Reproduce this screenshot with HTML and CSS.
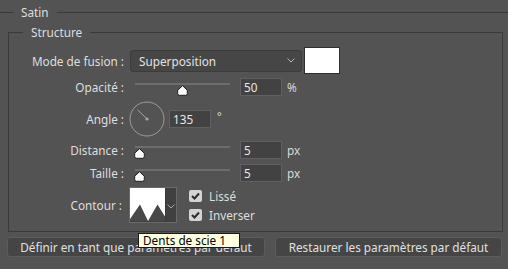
FILE: index.html
```html
<!DOCTYPE html>
<html lang="fr">
<head>
<meta charset="utf-8">
<title>Satin</title>
<link rel="stylesheet" href="styles.css">
</head>
<body>
<div class="panel">
  <div class="group-title"><span>Satin</span></div>
  <fieldset class="structure">
    <legend>Structure</legend>

    <div class="row row-mode">
      <span class="lbl">Mode de fusion :</span>
      <div class="select">
        <span>Superposition</span>
        <svg class="chev" width="8" height="5" viewBox="0 0 8 5"><path d="M0.5 0.5 L4 4 L7.5 0.5" fill="none" stroke="#b8b8b8" stroke-width="1"/></svg>
      </div>
      <div class="swatch"></div>
    </div>

    <div class="row row-slider row-opacity">
      <span class="lbl">Opacité :</span>
      <div class="slider">
        <div class="track"></div>
        <svg class="thumb" style="left:47px" width="11" height="11" viewBox="0 0 11 11"><path d="M5.5 0.7 L10.3 5.2 V8.6 Q10.3 10.3 8.6 10.3 H2.4 Q0.7 10.3 0.7 8.6 V5.2 Z" fill="#fafafa" stroke="#1e1e1e" stroke-width="1"/></svg>
      </div>
      <div class="field">50</div>
      <span class="unit">%</span>
    </div>

    <div class="row row-angle">
      <span class="lbl">Angle :</span>
      <svg class="dial" width="36" height="36" viewBox="0 0 36 36">
        <circle cx="18" cy="18" r="17" fill="none" stroke="#9c9c9c" stroke-width="1"/>
        <line x1="18" y1="18" x2="8.5" y2="8.8" stroke="#a8a8a8" stroke-width="1"/>
        <circle cx="18" cy="18" r="1.6" fill="#a8a8a8"/>
      </svg>
      <div class="field">135</div>
      <span class="deg">°</span>
    </div>

    <div class="row row-slider row-distance">
      <span class="lbl">Distance :</span>
      <div class="slider">
        <div class="track"></div>
        <svg class="thumb" style="left:4px" width="11" height="11" viewBox="0 0 11 11"><path d="M5.5 0.7 L10.3 5.2 V8.6 Q10.3 10.3 8.6 10.3 H2.4 Q0.7 10.3 0.7 8.6 V5.2 Z" fill="#fafafa" stroke="#1e1e1e" stroke-width="1"/></svg>
      </div>
      <div class="field">5</div>
      <span class="unit">px</span>
    </div>

    <div class="row row-slider row-size">
      <span class="lbl">Taille :</span>
      <div class="slider">
        <div class="track"></div>
        <svg class="thumb" style="left:4px" width="11" height="11" viewBox="0 0 11 11"><path d="M5.5 0.7 L10.3 5.2 V8.6 Q10.3 10.3 8.6 10.3 H2.4 Q0.7 10.3 0.7 8.6 V5.2 Z" fill="#fafafa" stroke="#1e1e1e" stroke-width="1"/></svg>
      </div>
      <div class="field">5</div>
      <span class="unit">px</span>
    </div>

    <div class="row row-contour">
      <span class="lbl lbl-contour">Contour :</span>
      <div class="contour">
        <svg class="curve" width="35" height="33" viewBox="0 0 35 33">
          <rect width="35" height="33" fill="#ffffff"/>
          <path d="M0 31 L10 16.5 L18 33 L27.5 16.5 L35 28.5 V33 H0 Z" fill="#484848"/>
        </svg>
        <div class="drop">
          <svg width="8" height="5" viewBox="0 0 8 5"><path d="M0.5 0.5 L4 4 L7.5 0.5" fill="none" stroke="#a8a8a8" stroke-width="1"/></svg>
        </div>
      </div>
      <div class="checks">
        <div class="check">
          <span class="box"><svg width="9" height="8" viewBox="0 0 9 8"><path d="M1 4 L3.5 6.5 L8 1.5" fill="none" stroke="#2c2c2c" stroke-width="2"/></svg></span>
          <span>Lissé</span>
        </div>
        <div class="check">
          <span class="box"><svg width="9" height="8" viewBox="0 0 9 8"><path d="M1 4 L3.5 6.5 L8 1.5" fill="none" stroke="#2c2c2c" stroke-width="2"/></svg></span>
          <span>Inverser</span>
        </div>
      </div>
    </div>
  </fieldset>

  <div class="buttons">
    <button class="btn btn-set">Définir en tant que paramètres par défaut</button>
    <button class="btn btn-reset">Restaurer les paramètres par défaut</button>
  </div>

  <div class="tooltip">Dents de scie 1</div>
</div>
</body>
</html>
```

FILE: styles.css
```css
* { box-sizing: border-box; }

html, body {
  margin: 0;
  background: #535353;
}

body {
  font-family: "Noto Sans", "Open Sans", sans-serif;
  font-size: 11.75px;
  line-height: 16px;
  color: #dedede;
}

.panel {
  position: relative;
  width: 508px;
  height: 269px;
  padding-top: 4px;
  overflow: hidden;
}

.group-title {
  display: flex;
  align-items: center;
  height: 16px;
}
.group-title::before {
  content: "";
  width: 13px;
  height: 1px;
  background: #3a3a3a;
}
.group-title::after {
  content: "";
  flex: 1;
  height: 1px;
  background: #3a3a3a;
}
.group-title span {
  padding: 0 8px;
}

.structure {
  margin: 4px 5px 0 8px;
  padding: 0 0 8px 0;
  border: 1px solid #3a3a3a;
  min-width: 0;
}
.structure legend {
  margin-left: 14px;
  padding: 0 8px;
  line-height: 16px;
}

.row {
  display: flex;
  align-items: center;
}
.lbl {
  width: 115px;
  text-align: right;
  margin-right: 6px;
  flex: none;
}
.lbl-contour {
  padding-right: 2px;
  align-self: center;
}

.row-mode { height: 27px; margin-top: 7px; }
.row-opacity { height: 22px; margin-top: 2px; }
.row-angle { height: 36px; margin-top: 3px; }
.row-distance { height: 22px; margin-top: 2px; }
.row-size { height: 22px; margin-top: 1px; }
.row-contour { height: 36px; margin-top: 3px; align-items: flex-start; }

.select {
  width: 172px;
  height: 22px;
  background: #464646;
  border: 1px solid #3c3c3c;
  border-radius: 3px;
  display: flex;
  align-items: center;
  justify-content: space-between;
  padding: 0 6px 0 8px;
  color: #e2e2e2;
}
.chev { display: block; }

.swatch {
  width: 36px;
  height: 27px;
  margin-left: 2px;
  background: #ffffff;
  border: 1px solid #2f2f2f;
}

.slider {
  position: relative;
  width: 106px;
  height: 22px;
  padding: 7px 0 0 5px;
  margin-right: 4px;
}
.track {
  width: 95px;
  height: 2px;
  background: #6d6d6d;
}
.thumb {
  position: absolute;
  top: 9px;
  display: block;
}

.field {
  width: 42px;
  height: 18px;
  background: #424242;
  border: 1px solid #606060;
  padding: 0 0 0 3px;
  line-height: 16px;
  color: #e8e8e8;
}
.unit {
  margin-left: 5px;
  color: #d8d8d8;
}

.dial {
  display: block;
  margin-left: -1px;
  margin-right: 4px;
}
.deg {
  align-self: flex-start;
  margin: 7px 0 0 6px;
  font-size: 11px;
}

.contour {
  display: flex;
  width: 48px;
  height: 36px;
  margin-left: -1px;
  border: 1px solid #6a6a6a;
  background: #404040;
}
.curve { display: block; flex: none; }
.drop {
  flex: 1;
  display: flex;
  align-items: center;
  justify-content: center;
  padding-top: 2px;
  border-left: 1px solid #3a3a3a;
}
.drop svg { display: block; }

.checks {
  display: flex;
  flex-direction: column;
  gap: 3px;
  margin: 1px 0 0 12px;
}
.check {
  display: flex;
  align-items: center;
  height: 16px;
  gap: 7px;
}
.box {
  width: 13px;
  height: 12px;
  border-radius: 2px;
  background: #d4d4d4;
  display: flex;
  align-items: center;
  justify-content: center;
}
.box svg { display: block; }

.buttons {
  display: flex;
  gap: 10px;
  padding: 0 6px 0 7px;
  margin-top: 5px;
}
.btn {
  height: 20px;
  padding: 0;
  background: #454545;
  border: 1px solid #5c5c5c;
  border-radius: 3px;
  color: #e0e0e0;
  font-family: inherit;
  font-size: 11.75px;
  line-height: 16px;
}
.btn-set { width: 258px; }
.btn-reset { width: 227px; }

.tooltip {
  position: absolute;
  left: 138px;
  top: 233px;
  width: 102px;
  height: 15px;
  background: #ffffe1;
  border: 1px solid #1a1a1a;
  color: #000000;
  padding: 0 0 0 4px;
  line-height: 13px;
  white-space: nowrap;
}
```
